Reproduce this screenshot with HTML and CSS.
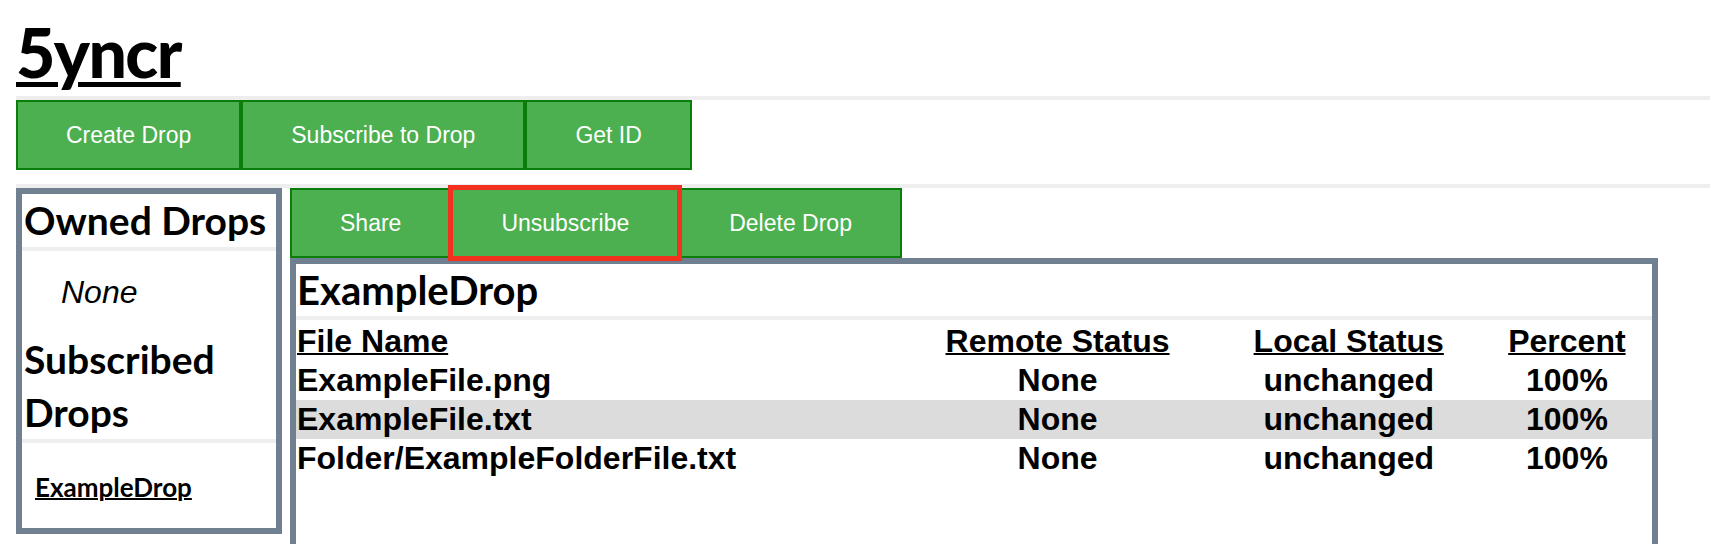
FILE: index.html
```html
<!DOCTYPE html>
<html lang="en">
<head>
<meta charset="utf-8">
<title>5yncr</title>
<link rel="stylesheet" href="styles.css">
</head>
<body>
  <header class="site-header">
    <h1 class="logo">5yncr</h1>
  </header>
  <hr class="rule">
  <nav class="toolbar">
    <button class="btn">Create Drop</button>
    <button class="btn">Subscribe to Drop</button>
    <button class="btn">Get ID</button>
  </nav>
  <hr class="rule rule-spaced">
  <div class="workspace">
    <aside class="sidebar">
      <h2 class="side-title">Owned Drops</h2>
      <div class="empty">None</div>
      <h2 class="side-title">Subscribed Drops</h2>
      <div class="drop-list"><a class="drop-link" href="#">ExampleDrop</a></div>
    </aside>
    <main class="content">
      <div class="toolbar">
        <button class="btn">Share</button>
        <button class="btn is-focused">Unsubscribe</button>
        <button class="btn">Delete Drop</button>
      </div>
      <section class="drop-panel">
        <h2 class="drop-title">ExampleDrop</h2>
        <table class="files">
          <colgroup>
            <col class="col-name">
            <col class="col-remote">
            <col class="col-local">
            <col class="col-percent">
          </colgroup>
          <thead>
            <tr>
              <th class="name">File Name</th>
              <th>Remote Status</th>
              <th>Local Status</th>
              <th>Percent</th>
            </tr>
          </thead>
          <tbody>
            <tr>
              <td class="name">ExampleFile.png</td>
              <td>None</td>
              <td>unchanged</td>
              <td>100%</td>
            </tr>
            <tr class="selected">
              <td class="name">ExampleFile.txt</td>
              <td>None</td>
              <td>unchanged</td>
              <td>100%</td>
            </tr>
            <tr>
              <td class="name">Folder/ExampleFolderFile.txt</td>
              <td>None</td>
              <td>unchanged</td>
              <td>100%</td>
            </tr>
          </tbody>
        </table>
      </section>
    </main>
  </div>
</body>
</html>
```

FILE: styles.css
```css
html, body {
  margin: 0;
  padding: 0;
  background: #ffffff;
  color: #000000;
}

body {
  padding: 0 16px;
  height: 544px;
  overflow: hidden;
  font-family: "Liberation Sans", Arial, sans-serif;
}

.site-header {
  height: 96px;
}

.logo {
  margin: 0;
  padding-top: 8px;
  font-family: Lato, "Noto Sans", sans-serif;
  font-weight: 900;
  font-size: 68px;
  line-height: 88px;
  letter-spacing: -1.6px;
  text-decoration: underline;
  text-decoration-thickness: 5px;
  text-underline-offset: 4px;
}

.rule {
  margin: 0;
  border: 0;
  height: 4px;
  background: #eeeeee;
}

.rule-spaced {
  margin-top: 14px;
}

.toolbar {
  display: flex;
}

.btn {
  height: 70px;
  margin: 0;
  padding: 0 48px;
  border: 2px solid #0b7d0b;
  background: #4caf50;
  color: #ffffff;
  font-family: "Liberation Sans", Arial, sans-serif;
  font-size: 23px;
  cursor: pointer;
}

.btn.is-focused {
  border-color: #f2311f;
  outline: 3px solid #f2311f;
  position: relative;
  z-index: 1;
}

.workspace {
  display: flex;
  gap: 8px;
  align-items: flex-start;
}

.sidebar {
  box-sizing: border-box;
  width: 266px;
  height: 346px;
  border: 6px solid #708090;
  flex: none;
}

.side-title {
  margin: 0;
  padding: 0 2px;
  font-family: Lato, "Noto Sans", sans-serif;
  font-weight: 700;
  font-size: 39px;
  line-height: 53px;
  border-bottom: 4px solid #eeeeee;
}

.empty {
  padding-left: 39px;
  font-style: italic;
  font-size: 32px;
  line-height: 82px;
}

.drop-list {
  padding: 24px 0 0 13px;
  line-height: 40px;
}

.drop-link {
  color: #000000;
  font-family: Lato, "Noto Sans", sans-serif;
  font-weight: 700;
  font-size: 26px;
  text-decoration: underline;
  text-decoration-thickness: 2px;
}

.content {
  flex: none;
  width: 1368px;
}

.drop-panel {
  box-sizing: border-box;
  width: 1368px;
  min-height: 330px;
  border: 6px solid #708090;
}

.drop-title {
  margin: 0;
  padding: 0 1px;
  font-family: Lato, "Noto Sans", sans-serif;
  font-weight: 700;
  font-size: 40px;
  line-height: 52px;
  border-bottom: 4px solid #eeeeee;
}

.files {
  width: 100%;
  margin-top: 2px;
  border-collapse: collapse;
  table-layout: fixed;
  font-family: "Liberation Sans", Arial, sans-serif;
  font-weight: 700;
  font-size: 32px;
  line-height: 37px;
}

.col-name { width: 603px; }
.col-remote { width: 316px; }
.col-local { width: 266px; }
.col-percent { width: 170px; }

.files th,
.files td {
  padding: 1px;
  text-align: center;
  white-space: nowrap;
}

.files th {
  text-decoration: underline;
  text-decoration-thickness: 2px;
}

.files .name {
  text-align: left;
}

.files .selected td {
  background: #dcdcdc;
}
```
